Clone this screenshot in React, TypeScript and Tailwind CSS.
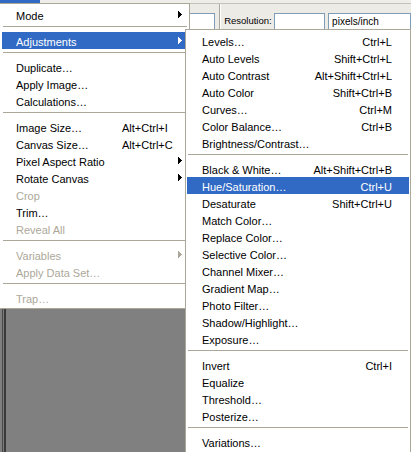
import React from "react";

type Item =
  | { sep: true }
  | { t: string; k?: string; arrow?: boolean; dis?: boolean; hi?: boolean; sep?: false };

const S: Item = { sep: true };

const leftItems: Item[] = [
  { t: "Mode", arrow: true },
  S,
  { t: "Adjustments", arrow: true, hi: true },
  S,
  { t: "Duplicate…" },
  { t: "Apply Image…" },
  { t: "Calculations…" },
  S,
  { t: "Image Size…", k: "Alt+Ctrl+I" },
  { t: "Canvas Size…", k: "Alt+Ctrl+C" },
  { t: "Pixel Aspect Ratio", arrow: true },
  { t: "Rotate Canvas", arrow: true },
  { t: "Crop", dis: true },
  { t: "Trim…" },
  { t: "Reveal All", dis: true },
  S,
  { t: "Variables", arrow: true, dis: true },
  { t: "Apply Data Set…", dis: true },
  S,
  { t: "Trap…", dis: true },
];

const subItems: Item[] = [
  { t: "Levels…", k: "Ctrl+L" },
  { t: "Auto Levels", k: "Shift+Ctrl+L" },
  { t: "Auto Contrast", k: "Alt+Shift+Ctrl+L" },
  { t: "Auto Color", k: "Shift+Ctrl+B" },
  { t: "Curves…", k: "Ctrl+M" },
  { t: "Color Balance…", k: "Ctrl+B" },
  { t: "Brightness/Contrast…" },
  S,
  { t: "Black & White…", k: "Alt+Shift+Ctrl+B" },
  { t: "Hue/Saturation…", k: "Ctrl+U", hi: true },
  { t: "Desaturate", k: "Shift+Ctrl+U" },
  { t: "Match Color…" },
  { t: "Replace Color…" },
  { t: "Selective Color…" },
  { t: "Channel Mixer…" },
  { t: "Gradient Map…" },
  { t: "Photo Filter…" },
  { t: "Shadow/Highlight…" },
  { t: "Exposure…" },
  S,
  { t: "Invert", k: "Ctrl+I" },
  { t: "Equalize" },
  { t: "Threshold…" },
  { t: "Posterize…" },
  S,
  { t: "Variations…" },
];

function Arrow({ color }: { color: string }) {
  return (
    <svg width="4" height="7" viewBox="0 0 4 7" shapeRendering="crispEdges" className="block">
      <rect x="0" y="0" width="1" height="7" fill={color} />
      <rect x="1" y="1" width="1" height="5" fill={color} />
      <rect x="2" y="2" width="1" height="3" fill={color} />
      <rect x="3" y="3" width="1" height="1" fill={color} />
    </svg>
  );
}

function Sep() {
  return (
    <div className="h-[9px] pt-[3px] px-[1px]">
      <div className="h-px bg-[#aca899]" />
    </div>
  );
}

function LeftRow({ it }: { it: Exclude<Item, { sep: true }> }) {
  const color = it.hi ? "text-white" : it.dis ? "text-[#aca899]" : "text-black";
  const arrowColor = it.hi ? "#ffffff" : it.dis ? "#aca899" : "#000000";
  return (
    <div className={`h-[17px] flex items-start ${it.hi ? "bg-[#316ac5]" : ""} ${color}`}>
      <div className="flex-1 pl-[14px] leading-[20px] whitespace-nowrap">{it.t}</div>
      <div className="w-[50px] leading-[20px] whitespace-nowrap">{it.k ?? ""}</div>
      <div className="w-[16px] h-[17px] pl-[6px] flex items-center">
        {it.arrow ? <Arrow color={arrowColor} /> : null}
      </div>
    </div>
  );
}

function SubRow({ it }: { it: Exclude<Item, { sep: true }> }) {
  const color = it.hi ? "text-white" : "text-black";
  return (
    <div className={`h-[17px] flex items-start justify-between pl-[15px] pr-[17px] ${it.hi ? "bg-[#316ac5]" : ""} ${color}`}>
      <div className="leading-[20px] whitespace-nowrap">{it.t}</div>
      <div className="leading-[20px] whitespace-nowrap">{it.k ?? ""}</div>
    </div>
  );
}

export default function App() {
  return (
    <div className="relative w-[411px] h-[452px] overflow-hidden bg-[#808080] flex flex-col font-['Liberation_Sans',Arial,sans-serif] text-[11px]">
      {/* menu bar strip */}
      <div className="h-[3px] flex shrink-0">
        <div className="w-[40px] bg-[#316ac5]" />
        <div className="flex-1 bg-[#eeede8]" />
      </div>
      <div className="h-px bg-[#c4c2ba] shrink-0" />
      {/* options bar */}
      <div className="h-[34px] shrink-0 bg-[#ecebe6] flex items-start pl-[160px]">
        <div className="mt-[9px] w-[60px] h-[22px] bg-white border border-[#7f9db9]" />
        <div className="ml-[4px] h-[34px] flex">
          <div className="w-px bg-[#aca899]" />
          <div className="w-px bg-white" />
        </div>
        <div className="ml-[3px] mt-[10px] w-[54px] text-[9.5px] leading-[13px] text-black whitespace-nowrap">
          Resolution:
        </div>
        <div className="mt-[9px] w-[56px] h-[22px] bg-white border border-[#7f9db9]" />
        <div className="ml-[3px] mt-[9px] w-[90px] h-[22px] bg-white border border-[#7f9db9] pl-[3px] text-[10px] leading-[16px] text-black whitespace-nowrap">
          pixels/inch
        </div>
      </div>
      {/* workspace */}
      <div className="flex-1 flex pl-[2px]">
        <div className="w-px bg-[#4a4a4a]" />
        <div className="w-px bg-[#7a7a7a]" />
        <div className="w-[2px] bg-[#3a3a3a]" />
        <div className="flex-1 bg-[#808080]" />
      </div>

      {/* Image menu */}
      <div className="absolute left-0 top-[3px] w-[190px] bg-white border-t border-r border-b border-[#aca899] py-[2px] pl-[2px] pr-[1px]">
        {leftItems.map((it, i) =>
          it.sep ? <Sep key={i} /> : <LeftRow key={i} it={it} />
        )}
      </div>

      {/* Adjustments submenu */}
      <div className="absolute left-[185px] top-[29px] w-[226px] bg-white border border-[#aca899] py-[2px] px-[1px]">
        {subItems.map((it, i) =>
          it.sep ? <Sep key={i} /> : <SubRow key={i} it={it} />
        )}
      </div>
    </div>
  );
}
